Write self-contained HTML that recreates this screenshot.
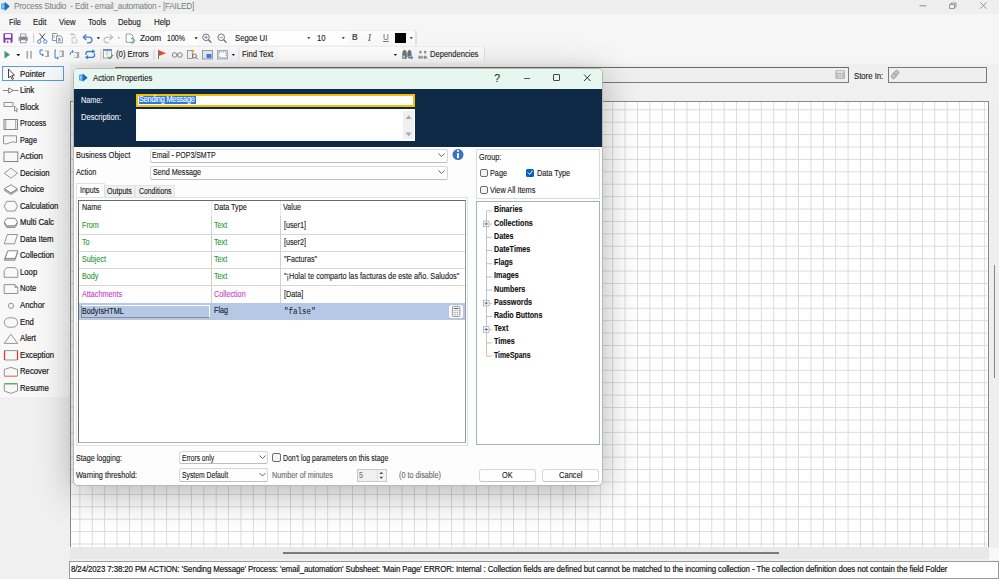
<!DOCTYPE html>
<html><head><meta charset="utf-8">
<style>
*{margin:0;padding:0;box-sizing:border-box}
html,body{width:999px;height:579px;overflow:hidden;background:#f0f0f0;font-family:"Liberation Sans",sans-serif;font-size:8.5px;color:#000}
.a{position:absolute;white-space:nowrap;line-height:1}
.grid{left:70px;top:101px;width:919px;height:447px;border:1px solid #8a8a8a;background-color:#fff;
 background-image:linear-gradient(to right,#dadada 1px,transparent 1px),linear-gradient(to bottom,#dadada 1px,transparent 1px);
 background-size:12.405px 12.41px;background-position:8.4px 7.3px}
.tool{left:20px;font-size:9.3px;color:#1a1a1a;-webkit-text-stroke-width:0.22px!important}
.mn{top:18px;font-size:8.8px;color:#1a1a1a}
.tb{font-size:8.8px;color:#222}
svg{position:absolute;left:0;top:0}
.lbl{font-size:8.3px;color:#1a1a1a}
.cmb{background:#fefefe;border:1px solid #d6d6d6;border-radius:2.5px;border-bottom-color:#bdbdbd}
.chk{width:8.5px;height:8.5px;border:1px solid #6e6e6e;border-radius:2px;background:#f4f4f4}
.hl{left:79px;width:386px;height:1px;background:#d6d6d6}
.gh{font-size:8.2px;color:#1a1a2a}
.gg{font-size:8.2px;color:#2e9a3a}
.gm{font-size:8.2px;color:#c945c9}
.gv{font-size:8.2px;color:#1a1a1a}
.tr{left:494px;font-size:8.2px;font-weight:bold;color:#111}
.btn{background:#fefefe;border:1px solid #d8d8d8;border-radius:3px;border-bottom-color:#c4c4c4}
.t{transform:scaleX(var(--s,0.88));transform-origin:0 0;-webkit-text-stroke-width:0.12px}
</style></head><body>
<!-- title bar -->
<div class="a" style="left:0;top:0;width:999px;height:13.6px;background:#efefef"></div>
<div class="a" style="left:0;top:13.6px;width:999px;height:53.4px;background:#f6f6f6"></div>
<div class="a" style="left:0;top:62px;width:999px;height:5px;background:linear-gradient(#f6f6f6,#ececec)"></div>
<div class="a" style="left:0;top:30px;width:416px;height:15px;background:#fafafa;border-right:1px solid #e2e2e2;border-top:1px solid #f0f0f0"></div>
<div class="a" style="left:0;top:46px;width:485px;height:16px;background:#fafafa;border-right:1px solid #e2e2e2;border-top:1px solid #f0f0f0"></div>

<div class="t a" style="--s:0.896;left:14px;top:2.4px;color:#7c7c7c;font-size:9.2px;letter-spacing:-0.25px;-webkit-text-stroke-width:0">Process Studio &nbsp;- Edit - email_automation - [FAILED]</div>
<!-- window controls -->
<svg width="999" height="20" style="position:absolute;left:0;top:0">
 <path d="M919.5 5.8 H926.3" stroke="#8a8a8a" stroke-width="1"/>
 <path d="M949.5 4.5 H954.5 V8.5 H949.5 Z M951 4.5 V3 H956 V7 H954.5" fill="none" stroke="#8a8a8a" stroke-width="0.9"/>
 <path d="M980.3 2.3 L986.6 8.7 M986.6 2.3 L980.3 8.7" stroke="#8a8a8a" stroke-width="0.9"/>
</svg>
<!-- menu -->
<div class="t a mn" style="--s:0.846;left:9px">File</div>
<div class="t a mn" style="left:33px">Edit</div>
<div class="t a mn" style="left:59px">View</div>
<div class="t a mn" style="left:88px">Tools</div>
<div class="t a mn" style="left:118px">Debug</div>
<div class="t a mn" style="--s:0.898;left:154px">Help</div>

<!-- toolbar 1 -->
<div class="t a tb" style="--s:0.942;left:140px;top:34.2px">Zoom</div>
<div class="a" style="left:165px;top:31px;width:33px;height:14px;background:#fff"></div>
<div class="t a tb" style="--s:0.800;left:167px;top:34.2px">100%</div>
<div class="a" style="left:232px;top:31px;width:82px;height:14px;background:#fff"></div>
<div class="t a tb" style="left:235px;top:34.2px">Segoe UI</div>
<div class="a" style="left:314px;top:31px;width:34px;height:14px;background:#fff"></div>
<div class="t a tb" style="left:317px;top:34.2px">10</div>
<div class="t a" style="left:352px;top:33px;font-weight:bold;font-size:9px;color:#555">B</div>
<div class="t a" style="left:368px;top:33px;font-style:italic;font-family:'Liberation Serif',serif;font-size:10px;color:#555">I</div>
<div class="t a" style="left:383px;top:33px;text-decoration:underline;font-size:9px;color:#777">U</div>
<div class="a" style="left:395px;top:33px;width:11px;height:10px;background:#000"></div>

<!-- toolbar 2 -->
<div class="t a tb" style="left:116px;top:50.2px">(0) Errors</div>
<div class="t a tb" style="left:242px;top:50.2px">Find Text</div>
<div class="a" style="left:278px;top:47px;width:124px;height:14px;background:#fff"></div>
<div class="t a tb" style="--s:0.860;left:430px;top:50.2px">Dependencies</div>

<!-- left tool panel -->
<div class="a" style="left:0;top:63px;width:70px;height:334px;background:#f8f8f8"></div>
<div class="a" style="left:2px;top:66px;width:62px;height:15px;border:1px solid #5a9be0;background:#f8f8f8"></div>
<div class="t a tool" style="--s:0.849;top:69.5px">Pointer</div>
<div class="t a tool" style="--s:0.833;top:86.0px">Link</div>
<div class="t a tool" style="--s:0.833;top:102.6px">Block</div>
<div class="t a tool" style="--s:0.780;top:119.1px">Process</div>
<div class="t a tool" style="--s:0.779;top:135.6px">Page</div>
<div class="t a tool" style="--s:0.886;top:152.2px">Action</div>
<div class="t a tool" style="--s:0.830;top:168.7px">Decision</div>
<div class="t a tool" style="--s:0.833;top:185.2px">Choice</div>
<div class="t a tool" style="--s:0.833;top:201.7px">Calculation</div>
<div class="t a tool" style="--s:0.833;top:218.3px">Multi Calc</div>
<div class="t a tool" style="--s:0.833;top:234.8px">Data Item</div>
<div class="t a tool" style="--s:0.833;top:251.3px">Collection</div>
<div class="t a tool" style="--s:0.833;top:267.9px">Loop</div>
<div class="t a tool" style="--s:0.833;top:284.4px">Note</div>
<div class="t a tool" style="--s:0.833;top:300.9px">Anchor</div>
<div class="t a tool" style="--s:0.833;top:317.5px">End</div>
<div class="t a tool" style="--s:0.833;top:334.0px">Alert</div>
<div class="t a tool" style="--s:0.833;top:350.5px">Exception</div>
<div class="t a tool" style="--s:0.833;top:367.0px">Recover</div>
<div class="t a tool" style="--s:0.833;top:383.6px">Resume</div>

<!-- canvas top bar -->
<div class="a" style="left:70px;top:67px;width:929px;height:34px;background:#f0f0f0"></div>
<div class="a" style="left:115px;top:67px;width:734px;height:16px;border:1px solid #7a7a7a;border-top-color:#6a6a6a;background:#efefef"></div>
<div class="t a tb" style="left:854px;top:71.5px">Store In:</div>
<div class="a" style="left:887.7px;top:67px;width:99.3px;height:16px;border:1px solid #7a7a7a;background:#efefef"></div>

<!-- canvas -->
<div class="a grid"></div>
<!-- h scrollbar -->
<div class="a" style="left:70px;top:547px;width:919px;height:12px;background:#e8e8e8"></div>
<div class="a" style="left:283px;top:552px;width:496px;height:1.5px;background:#7a7a7a"></div>
<!-- v scrollbar -->
<div class="a" style="left:989px;top:101px;width:10px;height:447px;background:#efefef"></div><div class="a" style="left:989px;top:548px;width:10px;height:12px;background:#f8f8f8"></div>
<div class="a" style="left:994.2px;top:265px;width:1.3px;height:113px;background:#858585"></div>

<!-- status bar -->
<div class="a" style="left:69px;top:561px;width:930px;height:18px;border:1px solid #9a9a9a;background:#fff"></div>
<div class="t a" style="--s:0.915;left:71px;top:565px;font-size:8.6px;color:#111;letter-spacing:-0.1px;-webkit-text-stroke-width:0.18px">8/24/2023 7:38:20 PM ACTION: 'Sending Message' Process: 'email_automation' Subsheet: 'Main Page' ERROR: Internal : Collection fields are defined but cannot be matched to the incoming collection - The collection definition does not contain the field Folder</div>

<!-- dialog -->
<div class="a" id="dlg" style="left:73px;top:68px;width:530px;height:418px;background:#fdfdfd;border:1px solid #b8b8b8;border-radius:5px;overflow:hidden;box-shadow:0 8px 36px rgba(0,0,0,0.3)">
 <div class="a" style="left:0;top:0;width:529px;height:20px;background:#e7f6ee"></div>
 <div class="a" style="left:0;top:20px;width:529px;height:58px;background:#0f2a47"></div>
</div>
<div class="t a" style="--s:0.887;left:93px;top:74px;font-size:8.8px;color:#1a1a1a">Action Properties</div>
<div class="t a" style="--s:1;left:494.3px;top:72.5px;font-size:10.5px;color:#333">?</div>
<div class="a" style="left:523.8px;top:77.5px;width:6.6px;height:1px;background:#555"></div>
<div class="a" style="left:553px;top:74px;width:7px;height:7px;border:1px solid #444;border-radius:1px"></div>

<div class="t a" style="--s:0.895;left:81px;top:97px;font-size:8.2px;color:#e8ecf2">Name:</div>
<div class="t a" style="--s:0.925;left:81px;top:114px;font-size:8.2px;color:#e8ecf2">Description:</div>
<div class="a" style="left:136px;top:93.5px;width:279px;height:13.5px;background:#fff;border:2px solid #f2c200"></div>
<div class="a" style="left:138.5px;top:96px;width:57px;height:8px;background:#2a7ae2"></div>
<div class="t a" style="left:139px;top:96px;font-size:8.2px;color:#fff;letter-spacing:-0.15px">Sending Message</div>
<div class="a" style="left:136px;top:109px;width:279px;height:32px;background:#fff"></div>
<div class="a" style="left:403px;top:111px;width:11px;height:28px;background:#f0f0f0"></div>

<div class="t a lbl" style="--s:0.906;left:76px;top:151px">Business Object</div>
<div class="t a lbl" style="left:76px;top:168px">Action</div>
<div class="a cmb" style="left:150px;top:148.5px;width:298px;height:14px"></div>
<div class="t a lbl" style="--s:0.841;left:152px;top:151px">Email - POP3/SMTP</div>
<div class="a cmb" style="left:150px;top:165.5px;width:298px;height:14px"></div>
<div class="t a lbl" style="--s:0.869;left:153px;top:168px">Send Message</div>

<!-- group box -->
<div class="a" style="left:476px;top:149px;width:124px;height:50px;border:1px solid #d6dbe2;background:#fff"></div>
<div class="t a lbl" style="left:479px;top:153px">Group:</div>
<div class="a chk" style="left:479.5px;top:168.5px"></div>
<div class="t a lbl" style="left:490px;top:169px">Page</div>
<div class="a" style="left:526px;top:168.5px;width:8px;height:8px;border-radius:1.5px;background:#0b5ec4"></div>
<div class="t a lbl" style="left:537px;top:169px">Data Type</div>
<div class="a chk" style="left:479.5px;top:185.5px"></div>
<div class="t a lbl" style="left:490px;top:186px">View All Items</div>

<!-- tabs -->
<div class="a" style="left:75.5px;top:183px;width:29.5px;height:15px;background:#fff;border:1px solid #dde2e8;border-bottom:none"></div>
<div class="a" style="left:105px;top:185px;width:30px;height:12px;background:#f0f0f0;border:1px solid #e4e4e4;border-bottom:none"></div>
<div class="a" style="left:135px;top:185px;width:40px;height:12px;background:#f0f0f0;border:1px solid #e4e4e4;border-bottom:none"></div>
<div class="t a lbl" style="--s:0.849;left:80px;top:185.5px">Inputs</div>
<div class="t a lbl" style="--s:0.857;left:107px;top:187px">Outputs</div>
<div class="t a lbl" style="--s:0.829;left:139px;top:187px">Conditions</div>
<div class="a" style="left:76px;top:197px;width:392px;height:249px;background:#fff;border:1px solid #dde2e8"></div>

<!-- inputs grid -->
<div class="a" style="left:78px;top:200px;width:388px;height:243px;background:#fff;border:1px solid #6a6a6a;border-right-color:#9a9a9a;border-bottom-color:#a8b0bc"></div>
<div class="a" style="left:211px;top:201px;width:1px;height:15px;background:#e8e8e8"></div>
<div class="a" style="left:280px;top:201px;width:1px;height:15px;background:#e8e8e8"></div>
<div class="a" style="left:211px;top:216px;width:1px;height:104px;background:#cfcfcf"></div>
<div class="a" style="left:280px;top:216px;width:1px;height:104px;background:#cfcfcf"></div>
<div class="a hl" style="top:234px"></div>
<div class="a hl" style="top:251px"></div>
<div class="a hl" style="top:268px"></div>
<div class="a hl" style="top:285px"></div>
<div class="a" style="left:79px;top:302.5px;width:386px;height:17.5px;background:#b5c9e7"></div>
<div class="a" style="left:80.5px;top:305px;width:129px;height:12.5px;background:#b5c9e7;border:1px solid #fff;border-bottom-color:#8c8c8c;border-left-color:#8c8c8c"></div>
<div class="a" style="left:449.2px;top:304.5px;width:13.5px;height:13.5px;background:#fff;border-radius:2.5px"></div>

<div class="t a gh" style="left:82px;top:204px">Name</div>
<div class="t a gh" style="left:214px;top:204px">Data Type</div>
<div class="t a gh" style="left:283px;top:204px">Value</div>

<div class="t a gg" style="left:82px;top:222.0px">From</div>
<div class="t a gg" style="left:214px;top:222.0px">Text</div>
<div class="t a gv" style="left:284px;top:222.0px">[user1]</div>
<div class="t a gg" style="left:82px;top:239.0px">To</div>
<div class="t a gg" style="left:214px;top:239.0px">Text</div>
<div class="t a gv" style="left:284px;top:239.0px">[user2]</div>
<div class="t a gg" style="left:82px;top:256.0px">Subject</div>
<div class="t a gg" style="left:214px;top:256.0px">Text</div>
<div class="t a gv" style="left:284px;top:256.0px">"Facturas"</div>
<div class="t a gg" style="left:82px;top:273.0px">Body</div>
<div class="t a gg" style="left:214px;top:273.0px">Text</div>
<div class="t a gv" style="--s:0.892;left:284px;top:273px">"¡Hola! te comparto las facturas de este año. Saludos"</div>
<div class="t a gm" style="left:82px;top:291.0px">Attachments</div>
<div class="t a gm" style="left:214px;top:291.0px">Collection</div>
<div class="t a gv" style="left:284px;top:291.0px">[Data]</div>
<div class="t a gh" style="left:82px;top:308px">BodyIsHTML</div>
<div class="t a gh" style="left:214px;top:307px">Flag</div>
<div class="t a" style="--s:0.9;left:284px;top:307.5px;font-family:'Liberation Mono',monospace;font-size:8.4px;color:#1a1a2a;-webkit-text-stroke-width:0.05px">"false"</div>

<!-- tree -->
<div class="a" style="left:476px;top:201px;width:124px;height:243.5px;background:#fff;border:1px solid #a9b0b8"></div>
<div class="a" style="left:486px;top:211.4px;width:1px;height:145px;background:#c4c4c4"></div>
<div class="t a tr" style="top:206.4px">Binaries</div>
<div class="t a tr" style="top:219.6px">Collections</div>
<div class="t a tr" style="top:232.8px">Dates</div>
<div class="t a tr" style="top:246.0px">DateTimes</div>
<div class="t a tr" style="top:259.2px">Flags</div>
<div class="t a tr" style="top:272.4px">Images</div>
<div class="t a tr" style="top:285.6px">Numbers</div>
<div class="t a tr" style="top:298.8px">Passwords</div>
<div class="t a tr" style="--s:0.865;top:312.0px">Radio Buttons</div>
<div class="t a tr" style="top:325.2px">Text</div>
<div class="t a tr" style="top:338.4px">Times</div>
<div class="t a tr" style="--s:0.840;top:351.6px">TimeSpans</div>

<!-- bottom -->
<div class="t a lbl" style="--s:0.865;left:76px;top:454px">Stage logging:</div>
<div class="t a lbl" style="--s:0.880;left:76px;top:471px">Warning threshold:</div>
<div class="a cmb" style="left:179px;top:450.5px;width:89px;height:13.5px"></div>
<div class="t a lbl" style="--s:0.798;left:182px;top:454px">Errors only</div>
<div class="a cmb" style="left:179px;top:468px;width:89px;height:13.5px"></div>
<div class="t a lbl" style="--s:0.818;left:182px;top:471px">System Default</div>
<div class="a chk" style="left:272.2px;top:453.3px"></div>
<div class="t a lbl" style="--s:0.835;left:283px;top:453.5px">Don't log parameters on this stage</div>
<div class="t a lbl" style="--s:0.87;left:271.8px;top:471px;color:#6a6a6a">Number of minutes</div>
<div class="a" style="left:357px;top:469px;width:29.7px;height:12.5px;background:#f0f0f0;border:1px solid #c8c8c8"></div>
<div class="a" style="left:376.5px;top:470px;width:9.2px;height:10.5px;background:#f4f4f4;border-left:1px solid #dcdcdc"></div>
<div class="t a lbl" style="left:358.5px;top:471px;color:#777">5</div>
<div class="t a lbl" style="--s:0.873;left:399px;top:471px;color:#6a6a6a">(0 to disable)</div>
<div class="a btn" style="left:478.5px;top:468.5px;width:57px;height:13px"></div>
<div class="t a lbl" style="left:502px;top:471px">OK</div>
<div class="a btn" style="left:541.5px;top:468.5px;width:57.5px;height:13px"></div>
<div class="t a lbl" style="--s:0.910;left:558.5px;top:471px">Cancel</div>

<svg width="999" height="579" viewBox="0 0 999 579">
 <!-- close X -->
 <path d="M584 74.5 L590.5 81 M590.5 74.5 L584 81" stroke="#333" stroke-width="1" fill="none"/>
 <!-- desc scroll arrows -->
 <path d="M405.6 119 L408.6 115.2 L411.6 119 Z" fill="#a8a8a8"/>
 <path d="M405.6 132.4 L408.6 136.2 L411.6 132.4 Z" fill="#a8a8a8"/>
 <!-- combo chevrons -->
 <path d="M438.5 153.5 L441.5 156.5 L444.5 153.5" stroke="#555" stroke-width="0.9" fill="none"/>
 <path d="M438.5 170.5 L441.5 173.5 L444.5 170.5" stroke="#555" stroke-width="0.9" fill="none"/>
 <path d="M259.5 455.5 L262.5 458.5 L265.5 455.5" stroke="#555" stroke-width="0.9" fill="none"/>
 <path d="M259.5 473 L262.5 476 L265.5 473" stroke="#555" stroke-width="0.9" fill="none"/>
 <!-- info icon -->
 <circle cx="458" cy="154.6" r="5.5" fill="#3b74bc"/>
 <rect x="457.05" y="153.2" width="1.9" height="4.9" fill="#fff"/>
 <circle cx="458" cy="151" r="1.05" fill="#fff"/>
 <!-- check mark -->
 <path d="M527.8 172.5 L529.6 174.4 L532.6 170.6" stroke="#fff" stroke-width="1" fill="none"/>
 <!-- spinner arrows -->
 <path d="M379.3 474 L381.3 471.8 L383.3 474 Z" fill="#555"/>
 <path d="M379.3 476.8 L381.3 479 L383.3 476.8 Z" fill="#555"/>
 <g transform="translate(0,1.4)">
 <!-- tree lines -->
 <g stroke="#c0c0c0" stroke-width="1">
  <path d="M486.5 209.5 H492 M489 222.7 H492 M486.5 235.9 H492 M486.5 249.1 H492 M486.5 262.3 H492 M486.5 275.5 H492 M486.5 288.7 H492 M489 301.9 H492 M486.5 315.1 H492 M489 328.3 H492 M486.5 341.5 H492 M486.5 354.7 H492"/>
 </g>
 <g fill="#fff" stroke="#a8a8a8" stroke-width="0.8">
  <rect x="483.4" y="219.7" width="5.6" height="5.6"/>
  <rect x="483.4" y="298.9" width="5.6" height="5.6"/>
  <rect x="483.4" y="325.3" width="5.6" height="5.6"/>
 </g>
 <g stroke="#3050a0" stroke-width="0.8">
  <path d="M484.6 222.5 H487.8 M486.2 220.9 V224.1 M484.6 301.7 H487.8 M486.2 300.1 V303.3 M484.6 328.1 H487.8 M486.2 326.5 V329.7"/>
 </g>
 </g>
 <!-- calc icon -->
 <rect x="452.3" y="306.2" width="7.6" height="10.3" rx="1.3" fill="#f4f4f4" stroke="#7c7c7c" stroke-width="0.8"/>
 <rect x="453.4" y="307.5" width="5.4" height="1.8" fill="#fff"/>
 <path d="M453.7 308.4 H458.5" stroke="#2a62b0" stroke-width="1"/>
 <path d="M453.5 310.4 H458.7 M453.5 312.5 H458.7 M453.5 314.6 H458.7" stroke="#8a8a8a" stroke-width="0.7" stroke-dasharray="1.1 0.6"/>
</svg>

<svg width="999" height="579" viewBox="0 0 999 579" style="z-index:0">
 <g fill="none" stroke="#7a7a7a" stroke-width="0.9">
  <!-- pointer -->
  <path d="M8.5 69 V78 L10.5 76 L12.3 79.5 L13.5 78.8 L11.8 75.5 L14.5 75.2 Z" fill="#fff" stroke="#333"/>
  <!-- link -->
  <path d="M3 90.5 H8.5 M8.5 88 V93 M8.5 88 L13.5 90.5 L8.5 93 M13.5 90.5 H18.5" stroke="#777"/>
  <!-- block -->
  <path d="M4 102.5 H13 V106.5 H4 Z" stroke="#888"/>
  <path d="M14.5 106 V111 L15.6 110 L16.5 111.8 L17.2 111.4 L16.4 109.7 L17.8 109.6 Z" fill="#fff" stroke="#555" stroke-width="0.6"/>
  <!-- process -->
  <rect x="4" y="119.5" width="13.5" height="10" stroke="#777"/>
  <path d="M5.8 119.5 V129.5 M15.7 119.5 V129.5" stroke="#999"/>
  <!-- page -->
  <path d="M3.5 135.8 H16.5 V142.5 Q12 141 9 143 Q6 144.8 3.5 143.5 Z" stroke="#888"/>
  <!-- action -->
  <rect x="4" y="152" width="13.8" height="9.6" stroke="#777"/>
  <!-- decision -->
  <path d="M4.3 173.2 L10.9 168.2 L17.5 173.2 L10.9 178.2 Z" stroke="#888"/>
  <!-- choice -->
  <path d="M4.3 190.3 L10.9 186.3 L17.5 190.3 L10.9 194.6 Z" fill="#c4c4c4" stroke="#8a8a8a"/>
  <path d="M4.3 188.8 L10.9 184.8 L17.5 188.8 L10.9 192.8 Z" fill="#fff" stroke="#7a7a7a"/>
  <!-- calculation -->
  <path d="M6.8 201.3 H15 L17.5 206.2 L15 211 H6.8 L4.3 206.2 Z" stroke="#888"/>
  <!-- multi calc -->
  <path d="M6.8 220 H15 L17.5 223.8 L15 227.5 H6.8 L4.3 223.8 Z" fill="#c4c4c4" stroke="#8a8a8a"/>
  <path d="M6.8 218.3 H15 L17.5 222 L15 225.8 H6.8 L4.3 222 Z" fill="#fff" stroke="#7a7a7a"/>
  <!-- data item -->
  <path d="M7.3 234.5 H17.5 L14.5 243.8 H4.3 Z" stroke="#888"/>
  <!-- collection -->
  <path d="M7.3 252.5 H17.5 L15 260.2 H4.3 Z" fill="#c4c4c4" stroke="#8a8a8a"/>
  <path d="M7.8 250.8 H17.8 L15.3 258.4 H5 Z" fill="#fff" stroke="#7a7a7a"/>
  <!-- loop -->
  <path d="M4.2 277.3 V270.3 L7 267.6 H15 L17.8 270.3 V277.3 Z" stroke="#888"/>
  <!-- note -->
  <path d="M4.2 284.6 H15 L17.8 287.4 V293.5 H4.2 Z M15 284.6 V287.4 H17.8" stroke="#888"/>
  <!-- anchor -->
  <circle cx="11" cy="305.8" r="2.6" stroke="#888"/>
  <!-- end -->
  <rect x="4.3" y="317.8" width="13.3" height="9.4" rx="4.7" stroke="#888"/>
  <!-- alert -->
  <path d="M4.2 343.4 L10.9 334.2 L17.6 343.4 Z" stroke="#888"/>
  <!-- exception -->
  <path d="M5 350.6 H17 M5 360 H17" stroke="#888"/>
  <path d="M4.5 350.6 V360 M17.5 350.6 V360" stroke="#e03030" stroke-width="1.2"/>
  <!-- recover -->
  <path d="M4.3 376 V369.5 L10.9 367.4 L17.5 369.5 V376" stroke="#888"/>
  <path d="M4.3 376.2 H17.5" stroke="#f07070" stroke-width="1.2"/>
  <!-- resume -->
  <path d="M4.3 383.8 H17.5" stroke="#3a9a4a" stroke-width="1.2"/>
  <path d="M4.3 384.2 V391 L10.9 393.4 L17.5 391 V384.2" stroke="#888"/>
 </g>
 <!-- toolbar 1 icons -->
 <g>
  <!-- save -->
  <rect x="3.4" y="33.3" width="9.2" height="9.5" rx="0.8" fill="#7e3db3"/>
  <rect x="5" y="34.2" width="6" height="3.6" fill="#fff"/>
  <rect x="5.5" y="39.6" width="5" height="3.2" fill="#fff"/>
  <rect x="7" y="40.8" width="1.3" height="2" fill="#7e3db3"/>
  <!-- print -->
  <rect x="20.5" y="34" width="5.5" height="3" fill="#fff" stroke="#888" stroke-width="0.8"/>
  <rect x="18.5" y="36.8" width="9.4" height="4.2" rx="1" fill="#999"/>
  <rect x="20.5" y="37.6" width="5.5" height="1" fill="#3d7dd1"/>
  <rect x="20.5" y="39.8" width="5.5" height="3" fill="#fff" stroke="#888" stroke-width="0.8"/>
  <rect x="33.2" y="33.5" width="0.9" height="9.5" fill="#c8c8c8"/>
  <!-- cut -->
  <path d="M39.5 33.5 L44.8 40 M45 33.5 L39.7 40" stroke="#555" stroke-width="1"/>
  <circle cx="39.2" cy="41.6" r="1.7" fill="none" stroke="#3d7dd1" stroke-width="0.9"/>
  <circle cx="45.3" cy="41.6" r="1.7" fill="none" stroke="#3d7dd1" stroke-width="0.9"/>
  <!-- copy -->
  <path d="M52.5 33.5 H56.5 L57.5 34.5 V40.5 H52.5 Z" fill="#fff" stroke="#777" stroke-width="0.8"/>
  <path d="M56.5 36 H60.8 L62.3 37.5 V42.8 H56.5 Z" fill="#fff" stroke="#777" stroke-width="0.8"/>
  <rect x="58" y="38" width="2.5" height="3.5" fill="#7eaee0"/>
  <rect x="53.6" y="35" width="1" height="3" fill="#7eaee0"/>
  <!-- paste disabled -->
  <path d="M69.5 34.5 H75 V41 M71 33.5 H73.5 V35 H71 Z" fill="none" stroke="#c8c8c8" stroke-width="0.8"/>
  <path d="M72 37.5 H75 L76.8 39.2 V43 H72 Z" fill="#f4f4f4" stroke="#c0c0c0" stroke-width="0.8"/>
  <!-- undo -->
  <path d="M83.5 37.2 H88.5 Q92 37.2 92 40 Q92 42.8 88.5 42.8 H87" fill="none" stroke="#3d7dd1" stroke-width="1.3"/>
  <path d="M86.3 34.4 L83.3 37.2 L86.3 40" fill="none" stroke="#3d7dd1" stroke-width="1.3"/>
  <path d="M96.8 37.3 H100 L98.4 39.3 Z" fill="#111"/>
  <!-- redo -->
  <path d="M112.5 37.2 H107.5 Q104 37.2 104 40 Q104 42.8 107.5 42.8 H109" fill="none" stroke="#b8b8b8" stroke-width="1.1"/>
  <path d="M109.7 34.4 L112.7 37.2 L109.7 40" fill="none" stroke="#b8b8b8" stroke-width="1.1"/>
  <path d="M117.5 37.3 H120.3 L118.9 39.1 Z" fill="#aaa"/>
  <!-- zoom page icon -->
  <path d="M126.2 34 H131 L133 36 V42.3 H126.2 Z" fill="#fff" stroke="#888" stroke-width="0.8"/>
  <path d="M131 38.8 A2.3 2.3 0 1 1 130.8 42.5" fill="none" stroke="#3aa060" stroke-width="1"/>
  <path d="M194.5 37.3 H197.7 L196.1 39.3 Z" fill="#111"/>
  <!-- zoom in/out -->
  <circle cx="206" cy="37.3" r="3.3" fill="none" stroke="#666" stroke-width="0.9"/>
  <path d="M208.4 39.7 L211.3 42.6" stroke="#666" stroke-width="1.3"/>
  <path d="M204.4 37.3 H207.6 M206 35.7 V38.9" stroke="#3d7dd1" stroke-width="0.8"/>
  <circle cx="221.2" cy="37.3" r="3.3" fill="none" stroke="#666" stroke-width="0.9"/>
  <path d="M223.6 39.7 L226.5 42.6" stroke="#666" stroke-width="1.3"/>
  <path d="M219.6 37.3 H222.8" stroke="#3d7dd1" stroke-width="0.8"/>
  <path d="M307.3 37.3 H310.3 L308.8 39.1 Z" fill="#111"/>
  <path d="M341.8 37.3 H344.8 L343.3 39.1 Z" fill="#111"/>
  <path d="M409.8 37.3 H412.8 L411.3 39.1 Z" fill="#111"/>
  <rect x="416" y="31" width="1" height="14" fill="#e0e0e0"/>
 </g>
 <!-- toolbar 2 icons -->
 <g>
  <path d="M4.5 50.8 L10 54.7 L4.5 58.6 Z" fill="#3a9a70"/>
  <path d="M16.5 54 H20.2 L18.35 56.2 Z" fill="#111"/>
  <rect x="26.5" y="51" width="1.6" height="7.6" fill="#a8a8a8"/>
  <rect x="30.2" y="51" width="1.6" height="7.6" fill="#a8a8a8"/>
  <!-- step into -->
  <path d="M40 53 V50 H43" fill="none" stroke="#3d7dd1" stroke-width="1"/>
  <path d="M40 53 Q40 55 43 55 M42 54 L43.5 55 L42 56" fill="none" stroke="#3d7dd1" stroke-width="1"/>
  <rect x="45" y="50.5" width="4" height="6.5" fill="#a8a8a8"/><rect x="45" y="51.5" width="2" height="4.5" fill="#f7f7f7"/>
  <!-- step over -->
  <path d="M56 50 H55 V58 H58 M57 56.8 L58.5 58 L57 59.2" fill="none" stroke="#3d7dd1" stroke-width="1"/>
  <rect x="59.5" y="50.5" width="4.5" height="6.5" fill="#a8a8a8"/><rect x="59.5" y="51.5" width="2.3" height="4.5" fill="#f7f7f7"/>
  <!-- step out -->
  <path d="M70 55 Q70 51.5 73 51.5 M72 50.3 L73.5 51.5 L72 52.7" fill="none" stroke="#3d7dd1" stroke-width="1"/>
  <rect x="74.5" y="52" width="4.7" height="6" fill="#a8a8a8"/><rect x="74.5" y="53" width="2.3" height="4" fill="#f7f7f7"/>
  <!-- loop -->
  <path d="M86 55 V53 Q86 51.5 88 51.5 H94 M92.5 50 L94.3 51.5 L92.5 53 M94.5 53.5 V55.5 Q94.5 57.3 92.5 57.3 H86 M88 55.8 L86 57.3 L88 58.8" fill="none" stroke="#3d7dd1" stroke-width="1.3"/>
  <rect x="100.5" y="49.5" width="0.9" height="10" fill="#c8c8c8"/>
  <!-- errors icon -->
  <rect x="103.5" y="49.5" width="8" height="8.5" fill="#fff" stroke="#888" stroke-width="0.8"/>
  <rect x="103.5" y="49.5" width="8" height="1.3" fill="#3d7dd1"/>
  <path d="M105 52 H110 M105 54 H110 M107 51 V57" stroke="#bbb" stroke-width="0.6"/>
  <path d="M108 57 L109.5 58.5 L113 55" fill="none" stroke="#3aa070" stroke-width="1.1"/>
  <rect x="153.5" y="49.5" width="0.9" height="10" fill="#c8c8c8"/>
  <!-- flag -->
  <rect x="158" y="50" width="0.9" height="9" fill="#666"/>
  <path d="M159 50.3 L166 53.2 L159 56 Z" fill="#e05030"/>
  <!-- glasses -->
  <circle cx="174.6" cy="55" r="2.3" fill="none" stroke="#666" stroke-width="0.8"/>
  <circle cx="180" cy="55" r="2.3" fill="none" stroke="#666" stroke-width="0.8"/>
  <path d="M176.9 54.6 H177.7" stroke="#666" stroke-width="0.8"/>
  <!-- find icon -->
  <rect x="187.5" y="50.5" width="5" height="8" fill="#eee" stroke="#888" stroke-width="0.8"/>
  <rect x="191" y="49.8" width="3" height="2" fill="#e8a030"/>
  <circle cx="194.5" cy="56" r="2" fill="none" stroke="#555" stroke-width="0.8"/>
  <path d="M196 57.5 L197.8 59.3" stroke="#555" stroke-width="0.9"/>
  <!-- grid icons -->
  <rect x="202.5" y="50.5" width="10" height="8.5" fill="#dde4ee" stroke="#888" stroke-width="0.8"/>
  <rect x="206.5" y="54" width="5" height="4" fill="#3d7dd1"/>
  <rect x="217.5" y="50.5" width="10" height="8.5" fill="#ddd" stroke="#999" stroke-width="0.8"/>
  <rect x="219" y="52" width="7" height="5.5" fill="#fff" stroke="#3d7dd1" stroke-width="0.7" stroke-dasharray="1 1"/>
  <path d="M231.8 54 H235 L233.4 56 Z" fill="#111"/>
  <rect x="238.5" y="48" width="0.9" height="13" fill="#dcdcdc"/>
  <path d="M393.8 54 H397 L395.4 56 Z" fill="#111"/>
  <!-- binoculars -->
  <path d="M402.3 58.8 V54 Q402.5 50 404.5 50 Q406.8 50 406.8 54 V58.8 Z" fill="#6f6f6f"/>
  <path d="M407.3 57 V54 Q407.5 50 409.4 50 Q411.4 50 411.6 54 V56 Z" fill="#6f6f6f"/>
  <rect x="403.2" y="55.6" width="1.6" height="2" fill="#ddd"/>
  <path d="M408.2 57.6 H412.2" stroke="#3a7bc8" stroke-width="1.5"/>
  <path d="M411 55.8 L413.3 57.6 L411 59.4 Z" fill="#3a7bc8"/>
  <!-- people -->
  <ellipse cx="420.4" cy="52" rx="1.2" ry="1.5" fill="#8a8a8a"/>
  <ellipse cx="425.2" cy="52" rx="1.2" ry="1.5" fill="#8a8a8a"/>
  <ellipse cx="419.6" cy="57.3" rx="1.2" ry="1.8" fill="#8a8a8a"/>
  <ellipse cx="421.8" cy="57.3" rx="1" ry="1.8" fill="#9a9a9a"/>
  <ellipse cx="424.8" cy="57.3" rx="1.2" ry="1.8" fill="#8a8a8a"/>
  <ellipse cx="426.2" cy="57.3" rx="0.8" ry="1.6" fill="#9a9a9a"/>
  <rect x="484" y="47" width="0.9" height="14" fill="#dcdcdc"/>
 </g>
 <!-- canvas bar icons -->
 <rect x="835.5" y="70.2" width="9.4" height="8.8" rx="0.8" fill="#aeaeae"/>
 <rect x="836.6" y="71.2" width="7.2" height="1.6" fill="#eee"/>
 <path d="M836.6 74.3 H843.8 M836.6 76 H843.8 M836.6 77.7 H843.8 M839 73.5 V78.5 M841.4 73.5 V78.5" stroke="#f2f2f2" stroke-width="0.5"/>
 <path d="M891.5 75.5 L895.6 70.8 Q896.6 69.9 897.6 70.6 L898.6 71.6 Q899.2 72.5 898.5 73.4 L894.4 78.4 Q893.5 79.2 892.5 78.5 L891.6 77.5 Q891 76.5 891.5 75.5 Z" fill="#c4c4c4" stroke="#8c8c8c" stroke-width="0.8"/>
 <path d="M893.6 73.2 L896.6 76" stroke="#8c8c8c" stroke-width="0.7"/>
 <!-- dialog icon -->
 <rect x="79" y="74.6" width="4.4" height="6.2" rx="1.3" fill="#5aa8e4"/>
 <path d="M80.5 76 V79.3 M81.8 76 V79.3" stroke="#d8ecfa" stroke-width="0.5"/>
 <path d="M82.5 73.9 Q82.9 73.5 83.4 74 L87.4 77.4 Q87.7 77.7 87.4 78 L83.4 81.3 Q82.9 81.8 82.5 81.3 Z" fill="#1670c0"/>
 <!-- title bar app icon -->
 <rect x="1" y="3.2" width="4.6" height="6.4" rx="1.4" fill="#5aa8e4"/>
 <path d="M2.6 4.8 V8 M3.9 4.8 V8" stroke="#d8ecfa" stroke-width="0.5"/>
 <path d="M4.6 2.4 Q5 2 5.6 2.5 L9.4 6.1 Q9.7 6.4 9.4 6.7 L5.6 10.2 Q5 10.7 4.6 10.2 Z" fill="#1670c0"/>
</svg>
</body></html>
